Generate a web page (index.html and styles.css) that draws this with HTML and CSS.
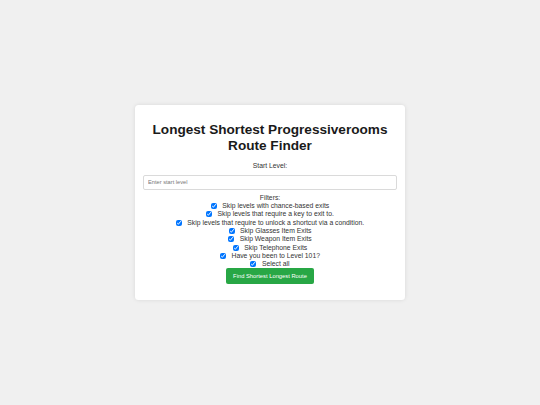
FILE: index.html
```html
<!DOCTYPE html>
<html lang="en">
<head>
<meta charset="utf-8">
<title>Longest Shortest Progressiverooms Route Finder</title>
<link rel="stylesheet" href="styles.css">
</head>
<body>
<main class="card">
  <h1 class="title">Longest Shortest Progressiverooms Route Finder</h1>
  <label class="field-label" for="start">Start Level:</label>
  <input class="text-input" id="start" type="text" placeholder="Enter start level">
  <div class="filters-label">Filters:</div>
  <div class="filters">
    <label class="filter"><input type="checkbox" checked><span>Skip levels with chance-based exits</span></label>
    <label class="filter"><input type="checkbox" checked><span>Skip levels that require a key to exit to.</span></label>
    <label class="filter"><input type="checkbox" checked><span>Skip levels that require to unlock a shortcut via a condition.</span></label>
    <label class="filter"><input type="checkbox" checked><span>Skip Glasses Item Exits</span></label>
    <label class="filter"><input type="checkbox" checked><span>Skip Weapon Item Exits</span></label>
    <label class="filter"><input type="checkbox" checked><span>Skip Telephone Exits</span></label>
    <label class="filter"><input type="checkbox" checked><span>Have you been to Level 101?</span></label>
    <label class="filter"><input type="checkbox" checked><span>Select all</span></label>
  </div>
  <button class="find-btn" type="button">Find Shortest Longest Route</button>
</main>
</body>
</html>
```
FILE: styles.css
```css
html, body {
  margin: 0;
  padding: 0;
}
body {
  min-height: 405px;
  background: #f0f0f0;
  font-family: "Liberation Sans", Arial, sans-serif;
  color: #333;
  display: flex;
  align-items: center;
  justify-content: center;
}
.card {
  box-sizing: border-box;
  width: 270px;
  padding: 8.5px 8px;
  background: #fff;
  border-radius: 3.5px;
  box-shadow: 0 0 4px rgba(0, 0, 0, 0.1);
  display: flex;
  flex-direction: column;
  align-items: center;
  text-align: center;
}
.title {
  font-size: 13.6px;
  line-height: 16.5px;
  font-weight: bold;
  color: #1a1a1a;
  margin: 8px 0 7.5px;
}
.field-label {
  font-size: 6.8px;
  line-height: 7.8px;
  display: block;
}
.text-input {
  box-sizing: border-box;
  width: 100%;
  height: 15.3px;
  margin: 4.7px 0 0;
  padding: 0 4px;
  border: 0.5px solid #dadada;
  border-radius: 2px;
  font-family: inherit;
  font-size: 5.7px;
  color: #333;
  outline: none;
}
.text-input::placeholder {
  color: #777;
}
.filters-label {
  font-size: 6.8px;
  line-height: 7.8px;
  margin-top: 4.1px;
}
.filters {
  display: flex;
  flex-direction: column;
  align-items: center;
}
.filter {
  display: flex;
  align-items: center;
  height: 8.35px;
  font-size: 6.8px;
  line-height: 7.8px;
}
.filter input {
  width: 6px;
  height: 6px;
  margin: 0 5.5px 0 0;
}
.find-btn {
  margin: -0.5px 0 7.5px;
  height: 16px;
  width: 88px;
  padding: 0;
  border: none;
  border-radius: 2px;
  background: #28a745;
  color: #fff;
  font-family: inherit;
  font-size: 5.8px;
}
```
